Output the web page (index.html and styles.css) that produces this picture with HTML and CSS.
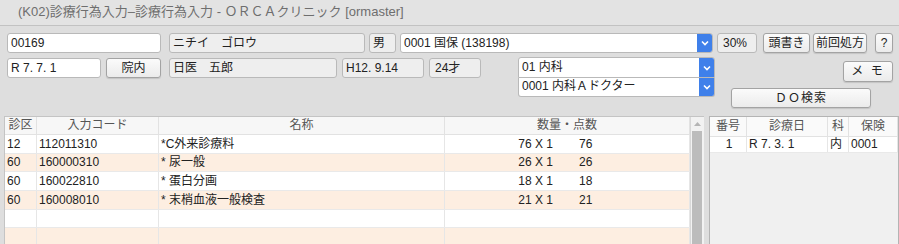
FILE: index.html
```html
<!DOCTYPE html>
<html lang="ja">
<head>
    <meta charset="UTF-8">
    <title>(K02)診療行為入力</title>
    <link rel="stylesheet" href="styles.css">
</head>
<body>
    <div class="titlebar">(K02)診療行為入力–診療行為入力 - ＯＲＣＡクリニック [ormaster]</div>

    <div class="row1">
        <div class="field w-id">00169</div>
        <div class="field gray w-kana">ニチイ　ゴロウ</div>
        <div class="field gray w-sex">男</div>
        <div class="select w-hoken">
            <span class="select-text">0001 国保 (138198)</span>
            <span class="arrow"><svg width="8" height="6" viewBox="0 0 8 6"><polyline points="1,1.5 4,4.5 7,1.5" fill="none" stroke="#fff" stroke-width="1.6"/></svg></span>
        </div>
        <div class="field gray w-rate">30%</div>
        <div class="btn w-head">頭書き</div>
        <div class="btn w-prev">前回処方</div>
        <div class="btn w-help">?</div>
    </div>

    <div class="lower">
        <div class="row2">
            <div class="field w-date">R 7. 7. 1</div>
            <div class="btn w-in">院内</div>
            <div class="field gray w-name">日医　五郎</div>
            <div class="field gray w-birth">H12. 9.14</div>
            <div class="field gray w-age">24才</div>
        </div>
        <div class="dept">
            <div class="select tall">
                <span class="select-text">01 内科</span>
                <span class="arrow"><svg width="8" height="6" viewBox="0 0 8 6"><polyline points="1,1.5 4,4.5 7,1.5" fill="none" stroke="#fff" stroke-width="1.6"/></svg></span>
            </div>
            <div class="select short">
                <span class="select-text">0001 内科Ａドクター</span>
                <span class="arrow"><svg width="8" height="6" viewBox="0 0 8 6"><polyline points="1,1.5 4,4.5 7,1.5" fill="none" stroke="#fff" stroke-width="1.6"/></svg></span>
            </div>
        </div>
        <div class="actions">
            <div class="btn w-memo">メ モ</div>
            <div class="btn w-do">ＤＯ検索</div>
        </div>
    </div>

    <div class="tables">
        <div class="main-table">
            <table class="grid">
                <thead>
                    <tr><th class="c-ku">診区</th><th class="c-code">入力コード</th><th class="c-name">名称</th><th class="c-qty">数量・点数</th></tr>
                </thead>
                <tbody>
                    <tr><td>12</td><td>112011310</td><td>*C外来診療料</td><td class="qty"><span class="n">76 X 1</span><span class="p">76</span></td></tr>
                    <tr class="alt"><td>60</td><td>160000310</td><td>* 尿一般</td><td class="qty"><span class="n">26 X 1</span><span class="p">26</span></td></tr>
                    <tr><td>60</td><td>160022810</td><td>* 蛋白分画</td><td class="qty"><span class="n">18 X 1</span><span class="p">18</span></td></tr>
                    <tr class="alt"><td>60</td><td>160008010</td><td>* 末梢血液一般検査</td><td class="qty"><span class="n">21 X 1</span><span class="p">21</span></td></tr>
                    <tr><td></td><td></td><td></td><td></td></tr>
                    <tr class="alt"><td></td><td></td><td></td><td></td></tr>
                </tbody>
            </table>
            <div class="scrollbar">
                <div class="scroll-up"><svg width="7" height="4" viewBox="0 0 7 4"><polygon points="0,4 3.5,0 7,4" fill="#b5b5b5"/></svg></div>
                <div class="thumb"></div>
            </div>
        </div>
        <div class="side-table">
            <table class="grid history">
                <thead>
                    <tr><th class="h-no">番号</th><th class="h-date">診療日</th><th class="h-ka">科</th><th class="h-ins">保険</th></tr>
                </thead>
                <tbody>
                    <tr><td class="center">1</td><td>R 7. 3. 1</td><td>内</td><td>0001</td></tr>
                </tbody>
            </table>
        </div>
    </div>
</body>
</html>
```

FILE: styles.css
```css
body {
    margin: 0;
    width: 899px;
    height: 244px;
    overflow: hidden;
    background: #dedede;
    font-family: "Liberation Sans", "Noto Sans CJK JP", sans-serif;
    font-size: 12px;
    color: #222;
}
.titlebar {
    height: 25px;
    line-height: 24px;
    padding-left: 18px;
    font-size: 13px;
    color: #6e6e6e;
    background: #e3e3e3;
    border-bottom: 1px solid #c2c2c2;
}

/* form rows */
.row1 {
    display: flex;
    margin: 7px 0 0 7px;
    height: 20px;
}
.field, .btn, .select {
    box-sizing: border-box;
    height: 20px;
    line-height: 18px;
    border-radius: 3px;
    white-space: nowrap;
}
.field {
    background: #fff;
    border: 1px solid #b9b9b9;
    padding-left: 3px;
}
.field.gray { background: #eeeeee; }
.btn {
    background: linear-gradient(#fbfbfb, #ebebeb);
    border: 1px solid #a3a3a3;
    box-shadow: 0 1px 1px rgba(0,0,0,0.12);
    text-align: center;
}
.select {
    display: flex;
    background: #fff;
    border: 1px solid #b9b9b9;
    overflow: hidden;
}
.select-text { flex: 1; padding-left: 3px; }
.arrow {
    width: 16px;
    margin: -1px -1px -1px 0;
    background: #3f80ea;
    display: flex;
    align-items: center;
    justify-content: center;
}

.w-id { width: 154px; }
.w-kana { width: 196px; margin-left: 8px; }
.w-sex { width: 27px; margin-left: 4px; }
.w-hoken { width: 313px; margin-left: 4px; }
.w-rate { width: 40px; margin-left: 4px; padding-left: 5px; }
.w-head { width: 47px; margin-left: 6px; }
.w-prev { width: 54px; margin-left: 3px; }
.w-help { width: 18px; margin-left: 8px; }

.lower {
    display: flex;
    height: 56px;
    margin-top: 4px;
}
.row2 {
    display: flex;
    margin: 1px 0 0 7px;
    height: 20px;
}
.w-date { width: 94px; }
.w-in { width: 55px; margin-left: 5px; }
.w-name { width: 168px; margin-left: 8px; }
.w-birth { width: 82px; margin-left: 5px; }
.w-age { width: 52px; margin-left: 5px; padding-left: 5px; }

.dept {
    width: 197px;
    margin-left: 37px;
    display: flex;
    flex-direction: column;
}
.dept .tall { height: 21px; line-height: 19px; border-radius: 3px 3px 0 0; }
.dept .short { height: 19px; line-height: 17px; border-top: none; border-radius: 0 0 3px 3px; }

.actions {
    margin-left: 16px;
    width: 162px;
    display: flex;
    flex-direction: column;
}
.w-memo { width: 50px; height: 21px; align-self: flex-end; margin-top: 4px; letter-spacing: 2px; }
.w-do { width: 140px; margin-top: 6px; letter-spacing: 1px; }

/* tables */
.tables {
    display: flex;
    margin-top: 3px;
}
.main-table {
    display: flex;
    margin-left: 4px;
    width: 699px;
    border-top: 1px solid #c4c4c4;
    border-left: 1px solid #c4c4c4;
    background: #fff;
}
.grid {
    border-collapse: collapse;
    table-layout: fixed;
}
.main-table .grid { width: 686px; }
.grid th {
    height: 17px;
    line-height: 17px;
    background: #f7f7f7;
    font-weight: normal;
    color: #555;
    border-right: 1px solid #e2e2e2;
    border-bottom: 1px solid #e2e2e2;
    padding: 0;
}
.grid td {
    height: 17.6px;
    line-height: 16px;
    padding: 0 0 0 2px;
    border-right: 1px solid #e6e6e6;
    border-bottom: 1px solid #e9e9e9;
    white-space: nowrap;
}
.grid tr.alt td { background: #fdeee1; }
.c-ku { width: 31px; }
.c-code { width: 121px; }
.c-name { width: 285px; }
.qty .n { display: inline-block; width: 106px; text-align: right; }
.qty .p { display: inline-block; margin-left: 26px; }

.scrollbar {
    width: 13px;
    border-left: 1px solid #d8d8d8;
    background: #f2f2f2;
    display: flex;
    flex-direction: column;
}
.scroll-up {
    height: 14px;
    display: flex;
    align-items: center;
    justify-content: center;
}
.thumb {
    flex: 1;
    margin: 0 2px 0 1px;
    background: #bcbcbc;
}

.side-table {
    margin-left: 5px;
    width: 188px;
    height: 130px;
    border: 1px solid #b4b4b4;
    border-bottom: none;
    background: #f0f0f0;
}
.history { width: 188px; }
.history th { height: 19px; line-height: 19px; background: #fafafa; }
.history td { height: 15px; line-height: 15px; background: #fff; }
.h-no { width: 36px; }
.h-date { width: 80px; }
.h-ka { width: 20px; }
.center { text-align: center; }
```
